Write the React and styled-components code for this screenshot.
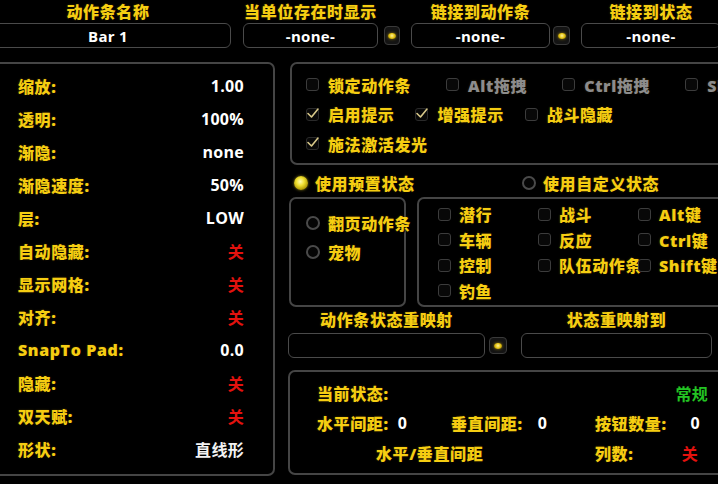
import React from 'react';
import styled, { createGlobalStyle } from 'styled-components';

const Y = '#f5cd12';
const FONT = '"Open Sans", "Noto Sans CJK SC", sans-serif';

const GlobalStyle = createGlobalStyle`
  html, body { margin: 0; padding: 0; background: #000; overflow: hidden; }
  body { font-family: ${FONT}; font-weight: 700; }
`;

const Page = styled.div`
  width: 718px;
  height: 484px;
  overflow: hidden;
  background: #000;
`;

const Canvas = styled.div`
  width: 800px;
  margin-left: -15px;
  display: flex;
  flex-direction: column;
`;

const TopRow = styled.div`
  display: flex;
  align-items: flex-end;
  padding-top: 3px;
`;

const FieldGroup = styled.div`
  display: flex;
  align-items: flex-end;
  gap: ${p => p.$gap || 0}px;
  margin-right: ${p => p.$mr || 0}px;
`;

const Field = styled.div`
  display: flex;
  flex-direction: column;
  align-items: center;
  width: ${p => p.$w}px;
  gap: ${p => p.$gap ?? 2}px;
`;

const Header = styled.div`
  height: ${p => p.$h || 18}px;
  line-height: ${p => p.$h || 18}px;
  font-size: 16px;
  font-weight: 900;
  letter-spacing: 0.6px;
  color: ${Y};
  white-space: nowrap;
  text-shadow: 1px 1px 1px #000, 0 0 2px rgba(90, 70, 0, 0.8);
`;

const Box = styled.div`
  box-sizing: border-box;
  width: 100%;
  height: 25px;
  border: 1.5px solid #4a4a4a;
  border-radius: 6px;
  display: flex;
  align-items: center;
  justify-content: center;
  color: #fff;
  font-size: 15px;
  letter-spacing: 0.3px;
`;

const DropButton = styled.div`
  box-sizing: border-box;
  width: ${p => p.$w || 16}px;
  height: ${p => p.$h || 19}px;
  margin-bottom: ${p => p.$mb ?? 3}px;
  border: 1.5px solid #3a3a3a;
  border-radius: 4px;
  background: #141414;
  display: flex;
  align-items: center;
  justify-content: center;
`;

const DropDot = styled.span`
  width: 8px;
  height: 6px;
  border-radius: 50%;
  background: radial-gradient(circle at 50% 45%, #fff1a0 0%, #e8c818 45%, #7a6000 100%);
  box-shadow: 0 0 3px rgba(240, 200, 20, 0.6);
`;

const MainRow = styled.div`
  display: flex;
  margin-top: 14px;
  padding-left: 7px;
  gap: 13px;
`;

const Panel = styled.div`
  box-sizing: border-box;
  border: 2px solid #454545;
  border-radius: 7px;
`;

const LeftPanel = styled(Panel)`
  width: 283px;
  height: 414px;
  padding: 5.5px 29px 0 24px;
  display: flex;
  flex-direction: column;
`;

const StatRow = styled.div`
  height: 33px;
  display: flex;
  align-items: center;
  justify-content: space-between;
  font-size: 16px;
`;

const Label = styled.span`
  color: ${p => (p.$dim ? '#8c8c8c' : Y)};
  font-size: 16px;
  font-weight: 900;
  letter-spacing: 0.6px;
  white-space: nowrap;
  text-shadow: 1px 1px 1px #000, 0 0 2px rgba(90, 70, 0, 0.8);
`;

const Value = styled.span`
  color: ${p => p.$color || '#fff'};
  font-size: ${p => p.$size || 16}px;
  white-space: nowrap;
  letter-spacing: 0.3px;
`;

const RightColumn = styled.div`
  width: 470px;
  display: flex;
  flex-direction: column;
`;

const OptionsPanel = styled(Panel)`
  margin-left: 2px;
  height: 103px;
  padding: 6px 0 0 14px;
  display: flex;
  flex-direction: column;
`;

const CheckRow = styled.div`
  height: 29.5px;
  display: flex;
  align-items: center;
  gap: ${p => p.$gap}px;
`;

const CheckItem = styled.div`
  display: flex;
  align-items: center;
  gap: 9px;
`;

const CheckBoxFrame = styled.span`
  box-sizing: border-box;
  width: 13px;
  height: 13px;
  border: 1.5px solid ${p => (p.$checked ? '#2a2a2a' : '#3c3c3c')};
  border-radius: 3px;
  background: #080808;
  position: relative;
  flex: none;
`;

const CheckMark = styled.svg`
  position: absolute;
  left: -1px;
  top: -3px;
`;

const CheckBox = ({ checked }) => (
  <CheckBoxFrame $checked={checked}>
    {checked && (
      <CheckMark width="14" height="14" viewBox="0 0 14 14">
        <path d="M2 7.5 L5.5 11 L12 3" fill="none" stroke="#d9c98a" strokeWidth="1.6" strokeLinecap="round" strokeLinejoin="round" />
      </CheckMark>
    )}
  </CheckBoxFrame>
);

const Check = ({ checked, dim, children }) => (
  <CheckItem>
    <CheckBox checked={checked} />
    <Label $dim={dim}>{children}</Label>
  </CheckItem>
);

const RadioRow = styled.div`
  margin-top: 5px;
  height: 26px;
  display: flex;
  align-items: center;
  padding-left: 6px;
`;

const RadioItem = styled.div`
  display: flex;
  align-items: center;
  gap: ${p => p.$gap ?? 7}px;
  width: ${p => (p.$w ? `${p.$w}px` : 'auto')};
`;

const RadioDot = styled.span`
  box-sizing: border-box;
  width: 14px;
  height: 14px;
  border-radius: 50%;
  flex: none;
  ${p =>
    p.$on
      ? `background: radial-gradient(circle at 45% 40%, #fffbb0 0%, #f0e030 35%, #a89000 75%, #3a3000 100%);
         box-shadow: 0 0 3px rgba(230, 210, 40, 0.6);`
      : `border: 2.5px solid #4a4a4a; background: #050505;`}
`;

const Radio = ({ on, w, gap, children }) => (
  <RadioItem $w={w} $gap={gap}>
    <RadioDot $on={on} />
    <Label>{children}</Label>
  </RadioItem>
);

const SubRow = styled.div`
  margin-top: 1px;
  margin-left: 1px;
  display: flex;
  gap: 11px;
`;

const PresetPanel = styled(Panel)`
  width: 117px;
  height: 110px;
  padding: 9px 0 0 15px;
  display: flex;
  flex-direction: column;
  overflow: visible;
`;

const PresetRow = styled.div`
  height: 29px;
  display: flex;
  align-items: center;
`;

const StatePanel = styled(Panel)`
  width: 340px;
  height: 110px;
  padding: 2.5px 0 0 19px;
  display: grid;
  grid-template-columns: 100px 100px 100px;
  grid-auto-rows: 25.5px;
  align-items: center;
`;

const GridCheck = styled.div`
  display: flex;
  align-items: center;
  gap: 8px;
`;

const RemapRow = styled.div`
  margin-top: 3px;
  display: flex;
  align-items: flex-end;
`;

const BottomPanel = styled(Panel)`
  margin-top: 12px;
  height: 105px;
  padding: 6px 0 0 27px;
  display: grid;
  grid-template-columns: 134px 144px 113px;
  grid-auto-rows: 30px;
  align-items: center;
`;

const Cell = styled.div`
  display: flex;
  align-items: center;
  grid-column: ${p => p.$col || 'auto'};
  justify-content: ${p => (p.$between ? 'space-between' : 'flex-start')};
  gap: ${p => p.$gap || 0}px;
  padding-left: ${p => p.$pl || 0}px;
  padding-right: ${p => p.$pr || 0}px;
`;

const stats = [
  ['缩放:', '1.00'],
  ['透明:', '100%'],
  ['渐隐:', 'none'],
  ['渐隐速度:', '50%'],
  ['层:', 'LOW'],
  ['自动隐藏:', '关', '#e3120e'],
  ['显示网格:', '关', '#e3120e'],
  ['对齐:', '关', '#e3120e'],
  ['SnapTo Pad:', '0.0'],
  ['隐藏:', '关', '#e3120e'],
  ['双天赋:', '关', '#e3120e'],
  ['形状:', '直线形', '#f2f2f2'],
];

const states = [
  ['潜行', '战斗', 'Alt键'],
  ['车辆', '反应', 'Ctrl键'],
  ['控制', '队伍动作条', 'Shift键'],
  ['钓鱼', null, null],
];

const Drop = props => (
  <DropButton {...props}>
    <DropDot />
  </DropButton>
);

export default function App() {
  return (
    <Page>
      <GlobalStyle />
      <Canvas>
        <TopRow>
          <FieldGroup $mr={12}>
            <Field $w={246}>
              <Header>动作条名称</Header>
              <Box>Bar 1</Box>
            </Field>
          </FieldGroup>
          <FieldGroup $gap={6} $mr={11}>
            <Field $w={135}>
              <Header>当单位存在时显示</Header>
              <Box>-none-</Box>
            </Field>
            <Drop />
          </FieldGroup>
          <FieldGroup $gap={3} $mr={11}>
            <Field $w={139}>
              <Header>链接到动作条</Header>
              <Box>-none-</Box>
            </Field>
            <Drop $w={17} />
          </FieldGroup>
          <FieldGroup>
            <Field $w={140}>
              <Header>链接到状态</Header>
              <Box>-none-</Box>
            </Field>
          </FieldGroup>
        </TopRow>

        <MainRow>
          <LeftPanel>
            {stats.map(([l, v, c]) => (
              <StatRow key={l}>
                <Label>{l}</Label>
                <Value $color={c}>{v}</Value>
              </StatRow>
            ))}
          </LeftPanel>

          <RightColumn>
            <OptionsPanel>
              <CheckRow $gap={35}>
                <Check>锁定动作条</Check>
                <Check dim>Alt拖拽</Check>
                <Check dim>Ctrl拖拽</Check>
                <Check dim>Shift拖拽</Check>
              </CheckRow>
              <CheckRow $gap={21}>
                <Check checked>启用提示</Check>
                <Check checked>增强提示</Check>
                <Check>战斗隐藏</Check>
              </CheckRow>
              <CheckRow $gap={21}>
                <Check checked>施法激活发光</Check>
              </CheckRow>
            </OptionsPanel>

            <RadioRow>
              <Radio on w={228}>使用预置状态</Radio>
              <Radio>使用自定义状态</Radio>
            </RadioRow>

            <SubRow>
              <PresetPanel>
                <PresetRow>
                  <Radio gap={8}>翻页动作条</Radio>
                </PresetRow>
                <PresetRow>
                  <Radio gap={8}>宠物</Radio>
                </PresetRow>
              </PresetPanel>
              <StatePanel>
                {states.flat().map((s, i) =>
                  s ? (
                    <GridCheck key={i}>
                      <CheckBox />
                      <Label>{s}</Label>
                    </GridCheck>
                  ) : (
                    <span key={i} />
                  )
                )}
              </StatePanel>
            </SubRow>

            <RemapRow>
              <FieldGroup $gap={4} $mr={14}>
                <Field $w={197} $gap={3}>
                  <Header $h={20}>动作条状态重映射</Header>
                  <Box />
                </Field>
                <Drop $w={18} $h={17} $mb={4} />
              </FieldGroup>
              <Field $w={191} $gap={3}>
                <Header $h={20}>状态重映射到</Header>
                <Box />
              </Field>
            </RemapRow>

            <BottomPanel>
              <Cell $col="1 / 3">
                <Label>当前状态:</Label>
              </Cell>
              <Cell $between>
                <span />
                <Value $color="#23c423">常规</Value>
              </Cell>

              <Cell $gap={9}>
                <Label>水平间距:</Label>
                <Value>0</Value>
              </Cell>
              <Cell $gap={15}>
                <Label>垂直间距:</Label>
                <Value>0</Value>
              </Cell>
              <Cell $between $pr={8}>
                <Label>按钮数量:</Label>
                <Value>0</Value>
              </Cell>

              <Cell $col="1 / 3" $pl={59}>
                <Label>水平/垂直间距</Label>
              </Cell>
              <Cell $between $pr={10}>
                <Label>列数:</Label>
                <Value $color="#e3120e">关</Value>
              </Cell>
            </BottomPanel>
          </RightColumn>
        </MainRow>
      </Canvas>
    </Page>
  );
}
